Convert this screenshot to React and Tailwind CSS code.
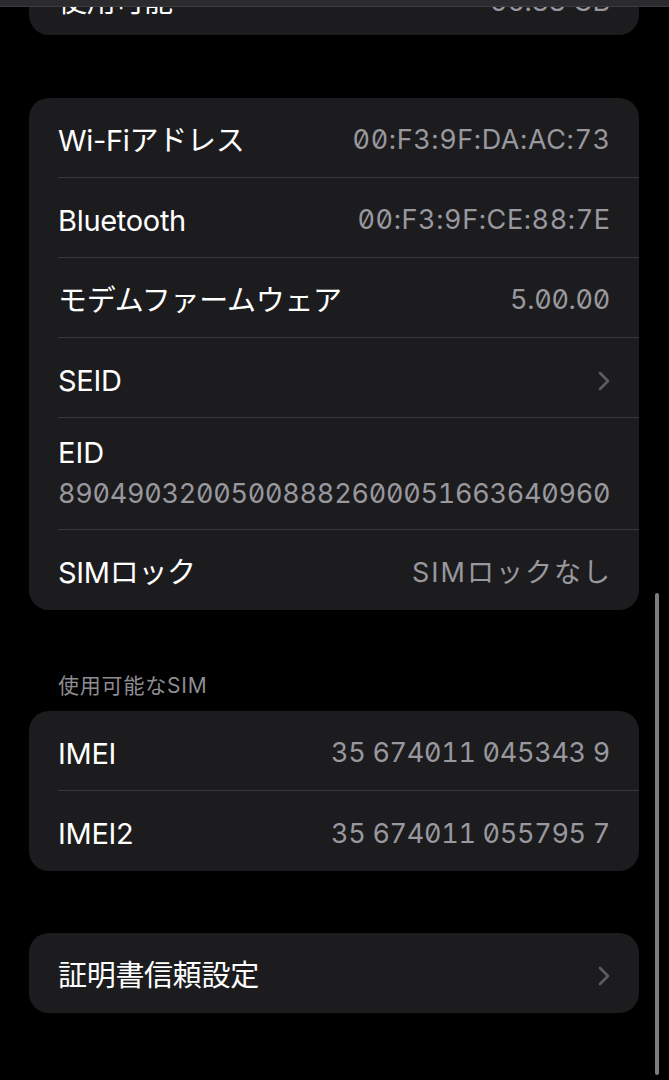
import React from 'react'

const font = "font-['Inter','Noto_Sans_CJK_JP',sans-serif]"

const Chevron = () => (
  <svg width="12" height="20" viewBox="0 0 12 20" fill="none" className="shrink-0">
    <path d="M2 2l8 8-8 8" stroke="#5c5c60" strokeWidth="2.6" strokeLinecap="round" strokeLinejoin="round" />
  </svg>
)

const valueTracking = {
  mac: 'tracking-[0.6px] mr-[-0.6px]',
  jp: 'tracking-[2px] mr-[-2px]',
  normal: 'tracking-[-0.3px]',
}

const Row = ({ label, value, chevron, last, kind = 'normal', top }) => (
  <div className="pl-[29px]">
    <div
      className={`h-[80px] flex items-center justify-between pr-[29px] ${top ? 'pt-[14px]' : 'pt-[6px]'} ${
        last ? '' : 'border-b border-[#38383a]'
      }`}
    >
      <span className="text-[29px] text-white tracking-[-0.3px]">{label}</span>
      {chevron ? (
        <Chevron />
      ) : (
        <span className={`text-[27px] text-[#98989e] [font-feature-settings:'zero','tnum'] ${valueTracking[kind]}`}>
          {value}
        </span>
      )}
    </div>
  </div>
)

const Card = ({ children, className = '' }) => (
  <div className={`bg-[#1c1c1e] rounded-[20px] overflow-hidden ${className}`}>{children}</div>
)

export default function App() {
  return (
    <div className={`relative h-[1080px] bg-black overflow-hidden ${font}`}>
      <div className="px-[29px] pr-[30px]">
        <Card className="mt-[-45px]">
          <Row label="使用可能" value="56.88 GB" last top />
        </Card>

        <Card className="mt-[63px]">
          <Row label="Wi-Fiアドレス" value="00:F3:9F:DA:AC:73" kind="mac" />
          <Row label="Bluetooth" value="00:F3:9F:CE:88:7E" kind="mac" />
          <Row label="モデムファームウェア" value="5.00.00" />
          <Row label="SEID" chevron />
          <div className="pl-[29px]">
            <div className="h-[112px] flex flex-col justify-center pr-[29px] pt-[2px] border-b border-[#38383a]">
              <span className="text-[29px] text-white leading-[36px]">EID</span>
              <span className="text-[27px] text-[#98989e] leading-[40px] mt-[3px] [font-feature-settings:'zero','tnum'] tracking-[-0.25px]">
                89049032005008882600051663640960
              </span>
            </div>
          </div>
          <Row label="SIMロック" value="SIMロックなし" kind="jp" last />
        </Card>

        <div className="h-[101px] flex items-end pb-[13px] pl-[29px]">
          <span className="text-[21px] text-[#8d8d93] leading-[24px] tracking-[0.8px]">使用可能なSIM</span>
        </div>

        <Card>
          <Row label="IMEI" value="35 674011 045343 9" />
          <Row label="IMEI2" value="35 674011 055795 7" last />
        </Card>

        <Card className="mt-[62px]">
          <Row label="証明書信頼設定" chevron last />
        </Card>
      </div>

      <div className="absolute top-0 left-0 right-0 h-[7px] bg-[#2b2b2d] border-b border-[#3d3d3f]" />
      <div className="absolute right-[10px] top-[593px] h-[482px] w-[4px] rounded-full bg-[#7d7d80]" />
    </div>
  )
}
